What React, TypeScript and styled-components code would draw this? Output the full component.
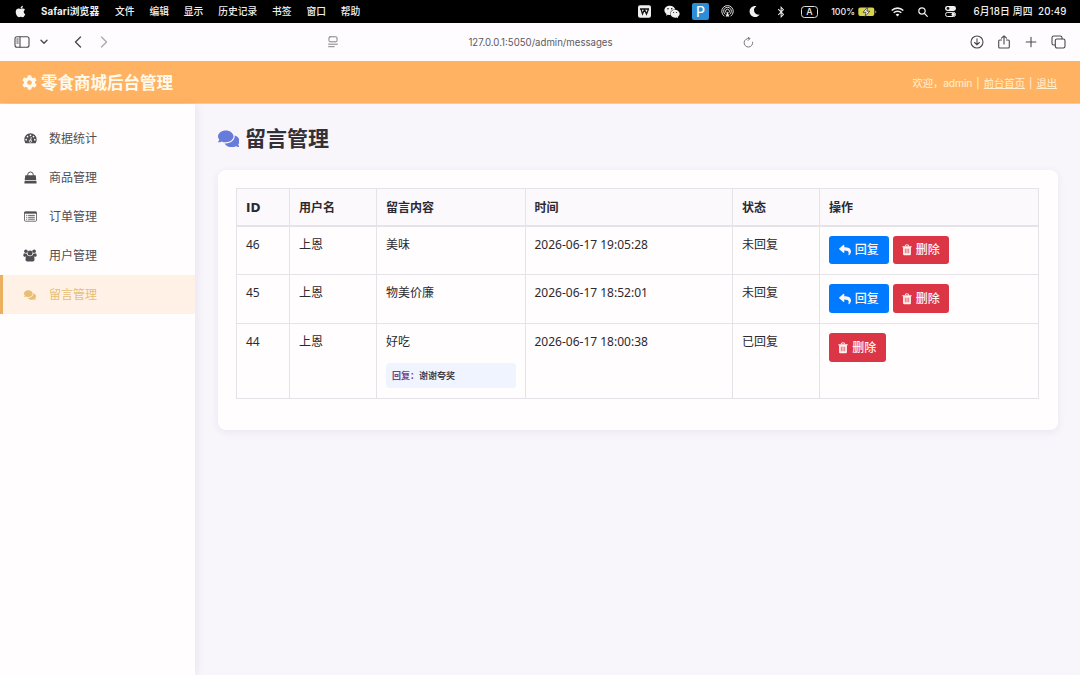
import React from "react";
import styled, { createGlobalStyle } from "styled-components";
import { FaApple, FaCog, FaComments, FaReply, FaWeixin, FaMoon, FaBluetoothB } from "react-icons/fa";

const GlobalStyle = createGlobalStyle`
  * { box-sizing: border-box; }
  body {
    margin: 0;
    background: #f8f5fb;
    color: #2c2a30;
    font: 12px/18px "Noto Sans", "Noto Sans CJK SC", sans-serif;
    overflow: hidden;
  }
  svg { display: block; flex: none; }
`;

const Page = styled.div`
  height: 675px;
  display: flex;
  flex-direction: column;
`;

const MenuBar = styled.div`
  height: 23px;
  flex: none;
  display: flex;
  align-items: center;
  padding: 0 13px 0 14px;
  background: #000;
  color: #f1f1f1;
  font: 500 9.75px/14px Inter, "Noto Sans CJK SC", sans-serif;
  white-space: nowrap;
`;

const AppName = styled.span`
  width: 60px;
  margin: 0 14px;
  font-weight: 700;
  letter-spacing: 0.1px;
`;

const Menus = styled.div`
  display: flex;
  gap: 14.9px;
`;

const Tray = styled.div`
  margin-left: auto;
  display: flex;
  align-items: center;
`;

const TrayItem = styled.span<{ $gap?: number; $width?: number }>`
  display: flex;
  align-items: center;
  justify-content: center;
  width: ${(p) => (p.$width ? `${p.$width}px` : "auto")};
  margin-left: ${(p) => p.$gap ?? 13}px;
`;

const Percent = styled(TrayItem)`
  font-size: 8.8px;
`;

const Clock = styled(TrayItem)`
  letter-spacing: 0.15px;
`;

const ParkingTile = styled(TrayItem)`
  height: 17px;
  border-radius: 2px;
  background: #2b8ed6;
  color: #fff;
  font-size: 14px;
  font-weight: 500;
`;

const InputSource = styled(TrayItem)`
  height: 12px;
  border: 1px solid #ddd;
  border-radius: 3.5px;
  font-size: 9px;
`;

const Toolbar = styled.div`
  height: 38px;
  flex: none;
  display: grid;
  grid-template-columns: 328px 1fr 326px;
  align-items: center;
  background: #fefcfe;
  color: #4b494d;
`;

const ToolGroup = styled.div<{ $end?: boolean }>`
  display: flex;
  align-items: center;
  justify-content: ${(p) => (p.$end ? "flex-end" : "flex-start")};
  padding: ${(p) => (p.$end ? "0 14px 0 0" : "0 0 0 14px")};
  gap: ${(p) => (p.$end ? "13px" : "0")};
`;

const ToolIcon = styled.span<{ $gap?: number; $muted?: boolean }>`
  margin-left: ${(p) => p.$gap ?? 0}px;
  opacity: ${(p) => (p.$muted ? 0.45 : 1)};
`;

const AddressBar = styled.div`
  display: flex;
  align-items: center;
  justify-content: space-between;
  color: #77757a;
`;

const Url = styled.span`
  padding-top: 1px;
  color: #5c5a5f;
  font: 9.65px/14px Inter, sans-serif;
`;

const Header = styled.header`
  height: 43px;
  flex: none;
  display: flex;
  align-items: center;
  justify-content: space-between;
  padding: 1px 23px 0 22px;
  background: #ffb362;
  border-bottom: 1px solid #fdc98f;
  color: #fffaee;
`;

const Brand = styled.div`
  display: flex;
  align-items: center;
  gap: 4px;
  font-size: 16.5px;
  font-weight: 700;
`;

const Account = styled.div`
  display: flex;
  gap: 4px;
  padding-top: 1px;
  color: #fff0d2;
  font: 10.3px/16px Inter, "Noto Sans CJK SC", sans-serif;
`;

const Welcome = styled.span`
  letter-spacing: -0.1px;
`;

const HeaderLink = styled.a`
  text-decoration: underline;
  text-underline-offset: 1px;
  text-decoration-thickness: 1px;
`;

const Body = styled.div`
  flex: 1;
  display: flex;
`;

const Sidebar = styled.nav`
  width: 195px;
  padding-top: 15px;
  background: #fffdfe;
  box-shadow: 2px 0 8px rgba(60, 30, 80, 0.07);
`;

const NavItem = styled.a<{ $active?: boolean }>`
  height: 39px;
  display: flex;
  align-items: center;
  gap: 12px;
  padding-left: 20px;
  border-left: 3px solid ${(p) => (p.$active ? "#eab060" : "transparent")};
  background: ${(p) => (p.$active ? "#fff1e6" : "transparent")};
  color: ${(p) => (p.$active ? "#e8bd74" : "#504e52")};
`;

const NavIcon = styled.span`
  width: 14px;
  display: flex;
  justify-content: center;
`;

const Main = styled.main`
  flex: 1;
  padding: 19px 22px 0 22.5px;
`;

const Title = styled.h1`
  height: 31px;
  margin: 0 0 16px;
  display: flex;
  align-items: center;
  gap: 6px;
  font-size: 21px;
  line-height: 31px;
  font-weight: 600;
  color: #333036;
`;

const Card = styled.section`
  height: 260px;
  width: 840px;
  padding: 18px 18px;
  border-radius: 8px;
  background: #fffdfe;
  box-shadow: 0 2px 8px rgba(70, 40, 90, 0.07);
`;

const Table = styled.table`
  width: 802px;
  margin-left: 0.5px;
  table-layout: fixed;
  border-collapse: collapse;
  border: 1px solid #e6e3e8;
`;

const HeadCell = styled.th<{ $width: number; $latin?: boolean }>`
  width: ${(p) => p.$width}px;
  height: 37px;
  padding: 2px 9px 0;
  border: 1px solid #e6e3e8;
  border-bottom: 2px solid #e6e3e8;
  background: #fbf9fc;
  text-align: left;
  font-family: ${(p) => (p.$latin ? '"DejaVu Sans", sans-serif' : '"Noto Sans", "Noto Sans CJK SC", sans-serif')};
  font-weight: 700;
`;

const Row = styled.tr<{ $height: number }>`
  height: ${(p) => p.$height}px;
`;

const Cell = styled.td`
  padding: 9px 8.5px 0 9px;
  border: 1px solid #e6e3e8;
  vertical-align: top;
`;

const ReplyBox = styled.div`
  height: 25px;
  margin-top: 12px;
  padding: 0 6px;
  border-radius: 4px;
  background: #f0f4fe;
  font-size: 9px;
  line-height: 26px;
  font-weight: 500;
`;

const ReplyLabel = styled.strong`
  color: #70468a;
`;

const Actions = styled.div`
  display: flex;
  gap: 4px;
`;

const Button = styled.button<{ $danger?: boolean }>`
  width: ${(p) => (p.$danger ? 56.5 : 59.5)}px;
  height: 28.5px;
  display: flex;
  align-items: center;
  justify-content: center;
  gap: 4px;
  padding: 1px 0 0;
  border: 0;
  border-radius: 3px;
  background: ${(p) => (p.$danger ? "#dc3545" : "#007bff")};
  color: #fff4f2;
  font: 500 12px/18px "Noto Sans", "Noto Sans CJK SC", sans-serif;
`;

type LineProps = { w: number; h: number; box: string; stroke?: number; children: React.ReactNode };
const Line = ({ w, h, box, stroke = 1.1, children }: LineProps) => (
  <svg width={w} height={h} viewBox={box} fill="none" stroke="currentColor" strokeWidth={stroke} strokeLinecap="round" strokeLinejoin="round">
    {children}
  </svg>
);

const DashboardIcon = () => (
  <svg width="13" height="11" viewBox="0 0 13 11">
    <path d="M.3 6.5a6.2 6.2 0 0 1 12.4 0q0 1.9-1 3.4-.2.4-.6.4H1.9q-.4 0-.6-.4-1-1.5-1-3.4z" fill="currentColor" />
    <g fill="#fffdfe">
      <circle cx="2.2" cy="6.7" r=".85" /><circle cx="3.5" cy="3.6" r=".85" /><circle cx="6.5" cy="2.3" r=".85" />
      <circle cx="9.5" cy="3.6" r=".85" /><circle cx="10.8" cy="6.7" r=".85" />
    </g>
    <path d="M7.3 4 6.5 7.8" stroke="#fffdfe" strokeWidth=".8" />
    <circle cx="6.4" cy="8.1" r="1.25" fill="none" stroke="#fffdfe" strokeWidth=".7" />
  </svg>
);

const BagIcon = () => (
  <svg width="13" height="13" viewBox="0 0 13 13">
    <path d="M3.7 5.5V3.8a2.8 2.8 0 0 1 5.6 0v1.7" fill="none" stroke="currentColor" strokeWidth="1" />
    <path d="M1.3 4.3h10.4l.6 5H.7z" fill="currentColor" />
    <path d="M.6 9.9h11.8l.2 2.1q0 .6-.6.6H1q-.6 0-.6-.6z" fill="currentColor" />
  </svg>
);

const ListIcon = () => (
  <svg width="13" height="11" viewBox="0 0 13 11">
    <rect x=".5" y=".8" width="12" height="9.4" rx=".8" fill="none" stroke="currentColor" strokeWidth=".8" />
    <path d="M.5 1.7h12" stroke="currentColor" strokeWidth="1.9" />
    <path d="M2.2 4.4h1M2.2 6.3h1M2.2 8.2h1M4.2 4.4h6.6M4.2 6.3h6.6M4.2 8.2h6.6" stroke="currentColor" strokeWidth=".9" />
  </svg>
);

const UsersIcon = () => (
  <svg width="14" height="13" viewBox="0 0 14 13" fill="currentColor">
    <circle cx="2.9" cy="2.3" r="1.8" /><circle cx="11.1" cy="2.3" r="1.8" /><circle cx="7" cy="4" r="2.5" />
    <path d="M.3 6.6q0-2.4 1.3-2.4 1.2.8 2.4.3-.2 1.3.5 2.2-1.3 0-2 1H1.3q-1 0-1-1.1zM13.7 6.6q0-2.4-1.3-2.4-1.2.8-2.4.3.2 1.3-.5 2.2 1.3 0 2 1h1.2q1 0 1-1.1z" />
    <path d="M4.5 6.3Q7 8.3 9.5 6.3q2 .2 2 4.4 0 1.7-1.7 1.7H4.2q-1.7 0-1.7-1.7 0-4.2 2-4.4z" />
  </svg>
);

const TrashIcon = () => (
  <svg width="10" height="12" viewBox="0 0 10 12">
    <path d="M3.2 2.2 3.7.9h2.6l.5 1.3" fill="none" stroke="currentColor" strokeWidth=".9" />
    <path d="M.3 2.2h9.4V3.2h-.8v7q0 1.1-1 1.1H2.1q-1 0-1-1.1v-7H.3z" fill="currentColor" />
    <path d="M3.3 4.6v4.7M5 4.6v4.7M6.7 4.6v4.7" stroke="#dc3545" strokeWidth=".7" />
  </svg>
);

const menus = ["文件", "编辑", "显示", "历史记录", "书签", "窗口", "帮助"];

const navigation = [
  { label: "数据统计", icon: <DashboardIcon /> },
  { label: "商品管理", icon: <BagIcon /> },
  { label: "订单管理", icon: <ListIcon /> },
  { label: "用户管理", icon: <UsersIcon /> },
  { label: "留言管理", icon: <FaComments size={12} />, active: true },
];

const columns = [
  { label: "ID", width: 53, latin: true },
  { label: "用户名", width: 87 },
  { label: "留言内容", width: 148.5 },
  { label: "时间", width: 207.5 },
  { label: "状态", width: 87 },
  { label: "操作", width: 219 },
];

const messages = [
  { id: 46, user: "上恩", text: "美味", time: "2026-06-17 19:05:28" },
  { id: 45, user: "上恩", text: "物美价廉", time: "2026-06-17 18:52:01" },
  { id: 44, user: "上恩", text: "好吃", time: "2026-06-17 18:00:38", reply: "谢谢夸奖" },
];

const SystemTray = () => (
  <Tray>
    <TrayItem $width={13}>
      <svg width="13" height="13" viewBox="0 0 13 13">
        <rect width="13" height="12.5" y=".3" rx="2" fill="#eee" />
        <path d="M2 4h9M3 4l1.5 5L6.5 4.5 8.5 9 10.5 4" fill="none" stroke="#111" strokeWidth="1.3" />
      </svg>
    </TrayItem>
    <TrayItem $width={16} $gap={13}><FaWeixin size={16} /></TrayItem>
    <ParkingTile $width={17} $gap={12}>P</ParkingTile>
    <TrayItem $width={13} $gap={12}>
      <Line w={13} h={13} box="0 0 13 13" stroke={0.9}>
        <path d="M3 11A5.8 5.8 0 1 1 10 11M4 9.2a3.9 3.9 0 1 1 5 0M5 7.6a2 2 0 1 1 3 0" />
        <path d="M6.5 6.5 4.7 11.5h3.6z" fill="currentColor" stroke="none" />
      </Line>
    </TrayItem>
    <TrayItem $width={11} $gap={15}><FaMoon size={11} /></TrayItem>
    <TrayItem $width={9} $gap={16}><FaBluetoothB size={12} /></TrayItem>
    <InputSource $width={17} $gap={16}>A</InputSource>
    <Percent $width={22} $gap={14}>100%</Percent>
    <TrayItem $width={19} $gap={4}>
      <svg width="19" height="10" viewBox="0 0 19 10">
        <rect x=".3" y=".5" width="16" height="8.5" rx="2" fill="#d9d450" />
        <path d="M17.3 3.5v2.7q1-.3 1-1.3t-1-1.4" fill="#aaa" />
        <path d="M9.7 0 5 5.3h3L7 9.6l4.8-5.4h-3z" fill="#fff" stroke="#333" strokeWidth=".8" />
      </svg>
    </TrayItem>
    <TrayItem $width={13} $gap={14}>
      <svg width="13" height="10" viewBox="0 0 13 10" fill="none" stroke="currentColor" strokeWidth="1.6">
        <path d="M.7 3.5a8.3 8.3 0 0 1 11.6 0M2.7 5.8a5.4 5.4 0 0 1 7.6 0" />
        <path d="M6.5 9.6 4.6 7.6a2.8 2.8 0 0 1 3.8 0z" fill="currentColor" stroke="none" />
      </svg>
    </TrayItem>
    <TrayItem $width={10} $gap={14}>
      <Line w={10} h={10} box="0 0 10 10" stroke={1.2}><circle cx="4" cy="4" r="3.2" /><path d="m6.5 6.5 2.8 2.8" /></Line>
    </TrayItem>
    <TrayItem $width={11} $gap={17}>
      <svg width="11" height="11" viewBox="0 0 11 11">
        <rect width="11" height="4.9" rx="2.4" fill="currentColor" /><circle cx="3" cy="2.45" r="1.4" fill="#111" />
        <rect x=".5" y="6.4" width="10" height="4.1" rx="2" fill="none" stroke="currentColor" /><circle cx="8.2" cy="8.4" r="1.7" fill="currentColor" />
      </svg>
    </TrayItem>
    <Clock $width={94} $gap={17}>6月18日 周四&nbsp; 20:49</Clock>
  </Tray>
);

const BrowserToolbar = () => (
  <Toolbar>
    <ToolGroup>
      <ToolIcon>
        <Line w={16} h={12} box="0 0 16 12"><rect x="1" y=".7" width="14" height="10.6" rx="2" /><path d="M6 1v10M2.8 3h1.4M2.8 5h1.4M2.8 7h1.4" /></Line>
      </ToolIcon>
      <ToolIcon $gap={10}><Line w={8} h={6} box="0 0 8 6" stroke={1.4}><path d="m1 1.3 3 3 3-3" /></Line></ToolIcon>
      <ToolIcon $gap={26}><Line w={8} h={12} box="0 0 8 12" stroke={1.4}><path d="M6.5 1 1.5 6l5 5" /></Line></ToolIcon>
      <ToolIcon $gap={18} $muted><Line w={8} h={12} box="0 0 8 12" stroke={1.4}><path d="m1.5 1 5 5-5 5" /></Line></ToolIcon>
    </ToolGroup>
    <AddressBar>
      <Line w={10} h={12} box="0 0 10 12" stroke={0.9}><rect x="1" y=".8" width="8" height="5" rx="1" /><path d="M.6 8.2h8.8M.6 10.7h5.6" /></Line>
      <Url>127.0.0.1:5050/admin/messages</Url>
      <Line w={11} h={11} box="0 0 11 11" stroke={1}><path d="M9.7 5.2a4.3 4.3 0 1 1-3.5-3.7M5 0l2 1.6L5.2 3.4" /></Line>
    </AddressBar>
    <ToolGroup $end>
      <Line w={14} h={14} box="0 0 14 14"><circle cx="7" cy="7" r="6" /><path d="M7 3.8v6M4.6 7.5 7 9.9l2.4-2.4" /></Line>
      <Line w={14} h={14} box="0 0 14 14"><path d="M4.5 5H2.7q-1 0-1 1v6q0 1 1 1h8.6q1 0 1-1V6q0-1-1-1H9.5M7 9V.8M4.5 3.2 7 .8l2.5 2.4" /></Line>
      <Line w={14} h={14} box="0 0 14 14"><path d="M7 2.2v9.6M2.2 7h9.6" /></Line>
      <Line w={15} h={14} box="0 0 15 14"><rect x="4.3" y="4" width="9.7" height="9" rx="1.7" /><path d="M4 10H2.8Q1 10 1 8.2V2.8Q1 1 2.8 1h6.4q1.8 0 1.8 1.8v1" /></Line>
    </ToolGroup>
  </Toolbar>
);

export default function App() {
  return (
    <Page>
      <GlobalStyle />
      <MenuBar>
        <FaApple size={13} />
        <AppName>Safari浏览器</AppName>
        <Menus>{menus.map((m) => <span key={m}>{m}</span>)}</Menus>
        <SystemTray />
      </MenuBar>
      <BrowserToolbar />
      <Header>
        <Brand><FaCog size={15} />零食商城后台管理</Brand>
        <Account>
          <Welcome>欢迎，admin</Welcome><span>|</span><HeaderLink>前台首页</HeaderLink><span>|</span><HeaderLink>退出</HeaderLink>
        </Account>
      </Header>
      <Body>
        <Sidebar>
          {navigation.map((n) => (
            <NavItem key={n.label} $active={n.active}><NavIcon>{n.icon}</NavIcon>{n.label}</NavItem>
          ))}
        </Sidebar>
        <Main>
          <Title><FaComments size={21.5} color="#667bda" />留言管理</Title>
          <Card>
            <Table>
              <thead><tr>{columns.map((c) => <HeadCell key={c.label} $width={c.width} $latin={c.latin}>{c.label}</HeadCell>)}</tr></thead>
              <tbody>
                {messages.map((m) => (
                  <Row key={m.id} $height={m.reply ? 75 : 49}>
                    <Cell>{m.id}</Cell>
                    <Cell>{m.user}</Cell>
                    <Cell>
                      {m.text}
                      {m.reply && <ReplyBox><ReplyLabel>回复：</ReplyLabel>{m.reply}</ReplyBox>}
                    </Cell>
                    <Cell>{m.time}</Cell>
                    <Cell>{m.reply ? "已回复" : "未回复"}</Cell>
                    <Cell>
                      <Actions>
                        {!m.reply && <Button><FaReply size={12} />回复</Button>}
                        <Button $danger><TrashIcon />删除</Button>
                      </Actions>
                    </Cell>
                  </Row>
                ))}
              </tbody>
            </Table>
          </Card>
        </Main>
      </Body>
    </Page>
  );
}
